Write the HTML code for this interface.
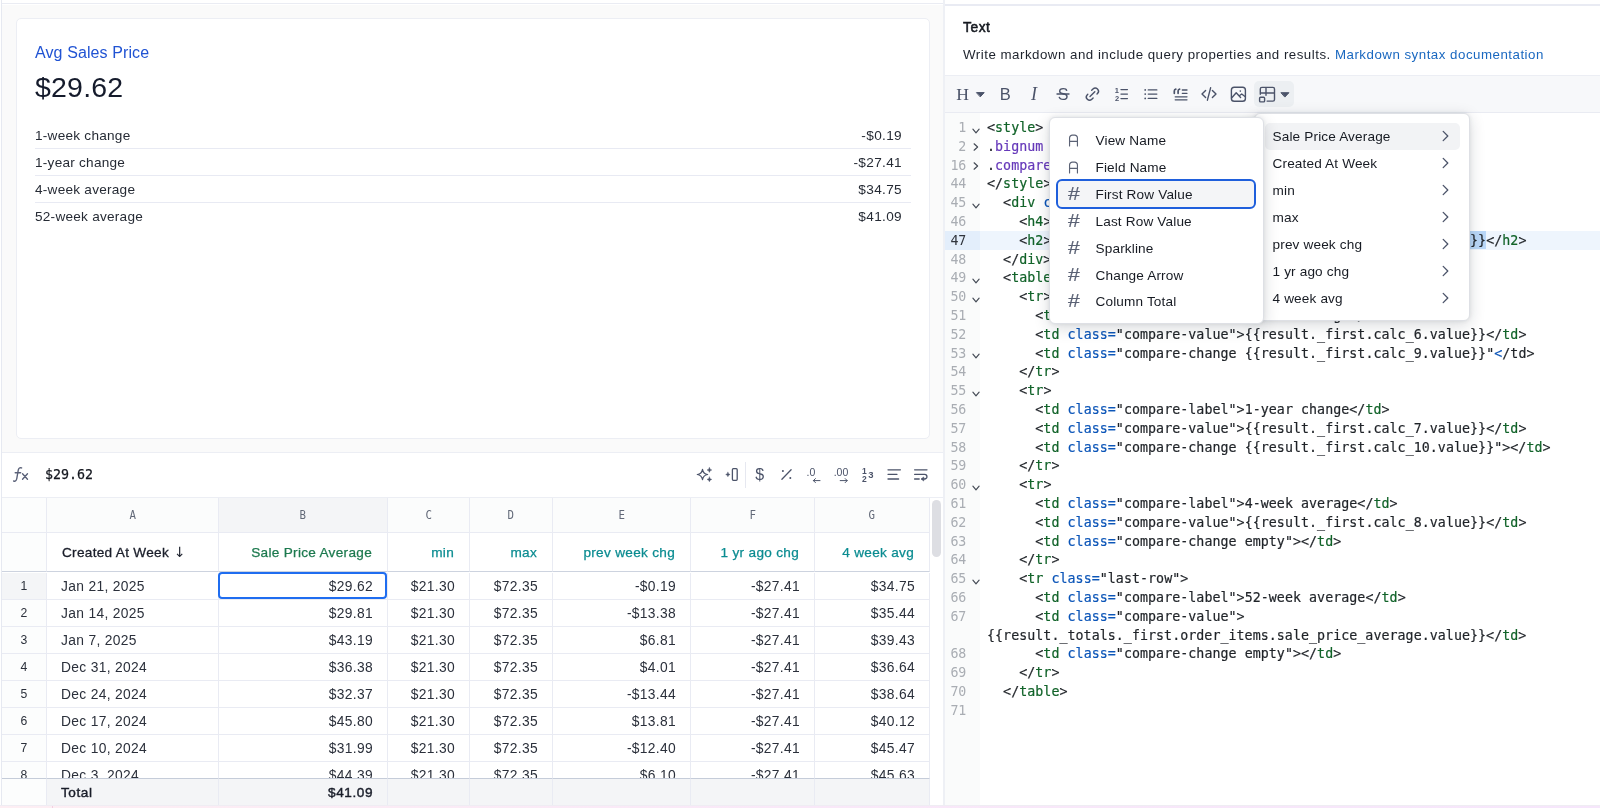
<!DOCTYPE html>
<html lang="en">
<head>
<meta charset="utf-8">
<title>Text tile editor</title>
<style>
*{box-sizing:border-box;margin:0;padding:0}
html,body{width:1600px;height:808px;overflow:hidden;background:#fff}
body{position:relative;transform:translateZ(0);will-change:transform;font-family:"Liberation Sans",Arial,sans-serif;color:#1f2430;-webkit-font-smoothing:antialiased}
.abs{position:absolute}
/* ---------- left pane ---------- */
#left{position:absolute;left:0;top:0;width:944px;height:808px;background:#fff}
#ledge{position:absolute;left:1px;top:0;width:1px;height:808px;background:#e6e9f1}
#topline{position:absolute;left:2px;top:3.200px;width:942px;height:1.300px;background:#eaecf3}
#prevbg{position:absolute;left:2px;top:5px;width:942px;height:447px;background:#fafafa}
#card{position:absolute;left:16px;top:18px;width:914px;height:421px;background:#fff;border:1px solid #eceef4;border-radius:5px}
#card h4{position:absolute;left:18px;top:24px;font-weight:400;font-size:16px;line-height:20px;color:#2053d3;letter-spacing:.1px;white-space:nowrap}
#card h2{position:absolute;left:18px;top:51px;font-weight:400;font-size:28.5px;line-height:34px;color:#151b2c;letter-spacing:.2px;white-space:nowrap}
.cmp{position:absolute;left:18px;width:876px;height:27px;border-bottom:1px solid #e8eaf3;font-size:13.6px;line-height:27px;color:#262b35;letter-spacing:.25px;white-space:nowrap}
.cmp.last{border-bottom:0}
.cmp b{font-weight:400;position:absolute;right:9px;top:0;letter-spacing:.35px}

/* ---------- formula bar ---------- */
#fbar{position:absolute;left:2px;top:452px;width:942px;height:46px;background:#fff;border-top:1px solid #eceef4;border-bottom:1px solid #eceef4}
#fx{position:absolute;left:8.600px;top:11.200px}
#fval{position:absolute;left:43px;top:12px;font-family:"DejaVu Sans Mono","Liberation Mono",monospace;font-size:13.3px;line-height:20px;color:#14171f;-webkit-text-stroke:.25px #14171f;white-space:nowrap}
.fi{position:absolute;top:11px;width:22px;height:22px}
#fdiv{position:absolute;left:743px;top:9px;width:1px;height:26px;background:#e6e8f0}
/* ---------- grid ---------- */
#grid{position:absolute;left:0;top:0;width:944px;height:808px;font-size:13.8px;letter-spacing:.33px}
.gr{position:absolute;left:0;width:930px}
.c{position:absolute;top:0;height:100%;border-right:1px solid #e9ebf3;border-bottom:1px solid #e9ebf3;white-space:nowrap;overflow:hidden;background:#fff}
.lr .c{background:#fbfcfc;line-height:33px;text-align:center;font-family:"DejaVu Sans Mono","Liberation Mono",monospace;font-size:12.5px;color:#626978;letter-spacing:0}
.lr .c.sel{background:#f4f5f7}
.lt span{display:inline-block;transform:scaleX(.86)}
.nr .c{line-height:39px;border-bottom-color:#cdd3df;font-size:13.6px;letter-spacing:.3px}
.c.rn{background:#fcfdfd;text-align:center;color:#737a8a;font-size:12.2px;letter-spacing:0}
.c.rn.selr{background:#f4f5f7}
.fn{text-align:right;padding-right:15px}
.fn.dim{text-align:left;padding-left:15px;padding-right:0;color:#1a1e2a;-webkit-text-stroke:.3px #1a1e2a}
.fn.dim i{font-style:normal;-webkit-text-stroke:0;font-size:14px;font-family:"DejaVu Sans",sans-serif;margin-left:1px;position:relative;top:-.5px}
.fn.meas{color:#1d7a4f;-webkit-text-stroke:.25px #1d7a4f}
.fn.calc{color:#0b8c91;-webkit-text-stroke:.25px #0b8c91}
.dr .c{line-height:27px;color:#2b303b}
.d.l{padding-left:14px}
.d.r{text-align:right;padding-right:14px}
#selcell{position:absolute;left:218px;top:572px;width:169px;height:27px;border:2px solid #1f6df0;border-radius:4px}
.tr .c{background:#f4f5f7;border-top:1px solid #c5ccd9;line-height:27.500px;font-weight:400;-webkit-text-stroke:.42px #1a1e2a;color:#1a1e2a;border-bottom:0;letter-spacing:.55px;font-size:13.6px}
.tr .c.rn{background:#fcfdfd}
.t.l{padding-left:14px}
.t.r{text-align:right;padding-right:14px}
#gscroll{position:absolute;left:932px;top:499.500px;width:9px;height:57px;border-radius:4.500px;background:#dddee3}
#pink{position:absolute;left:0;top:805px;width:1600px;height:3px;border-top:1px solid #efedf3;background:linear-gradient(90deg,#fdeef3 0%,#f9e8f8 50%,#f6e6fb 100%)}
#pinkv{position:absolute;left:52px;top:806px;width:1px;height:2px;background:#f3cfe0}

/* ---------- right pane ---------- */
#right{position:absolute;left:945px;top:5px;width:655px;height:801px;background:#fff}
#vsep{position:absolute;left:943.400px;top:0;width:1.300px;height:806px;background:#eef0f5}
#topr{position:absolute;left:945px;top:4px;width:655px;height:1.600px;background:#e9ebf3}
#rt{position:absolute;left:18px;top:13px;font-size:13.8px;line-height:20px;font-weight:400;-webkit-text-stroke:.5px #14181f;color:#14181f;letter-spacing:.55px}
#rd{position:absolute;left:18px;top:40px;font-size:13.3px;line-height:20px;color:#1d222c;letter-spacing:.5px;white-space:nowrap}
#rd a{color:#1a68c0;text-decoration:none}
#tb{position:absolute;left:0;top:70px;width:655px;height:38px;background:#f7f8fa;border-top:1px solid #eceef4;border-bottom:1px solid #e9ebf2}
.ti{position:absolute;top:0;height:36px;color:#4b5369;text-align:center;line-height:36px}
#tblbtn{position:absolute;left:309px;top:5px;width:40px;height:26px;border-radius:5px;background:#eceff2}
.ic{position:absolute}
/* editor */
#ed{position:absolute;left:0;top:108px;width:655px;height:693px;background:#fff;overflow:hidden}
#gut{position:absolute;left:0;top:0;width:35px;height:693px;background:#fafbfb}
#code{position:absolute;left:0;top:5px;width:655px;font-family:"DejaVu Sans Mono","Liberation Mono",monospace;font-size:13.3px;line-height:18.8px;color:#1f2328;letter-spacing:.045px}
.ln{position:relative;height:18.8px;white-space:pre}
.ln.act{background:#eef5fd}
.ln.act .no{background:#e3eefb;color:#30343c}
.no{position:absolute;left:0;top:0;width:35px;height:18.8px;padding-right:14px;padding-top:1px;text-align:right;color:#a9adb3;letter-spacing:-.2px}
.fd{position:absolute;left:26px}
.fdv{top:7.7px}
.fdr{top:5.2px;left:25.800px}
.cd{position:absolute;left:42px;top:1px;-webkit-text-stroke:.2px}
.tg{color:#116329}
.at{color:#0b55b8}
.sel{color:#6639ba}
.hs{background:#b9d7f8;padding:1.650px 0}

/* ---------- menus ---------- */
.menu{position:absolute;background:#fff;border:1px solid #dee0e5;border-radius:6px;box-shadow:0 4px 16px rgba(20,28,45,.16),0 0 4px rgba(20,28,45,.09);font-size:13.6px;color:#171b23;letter-spacing:.15px}
#m2{left:1254px;top:113px;width:215.600px;height:208px}
#m1{left:1048.500px;top:117px;width:215.500px;height:207px}
.mi{position:absolute;left:7px;height:27px;line-height:27px;white-space:nowrap;border-radius:5px}
#m1 .mi{width:198px;padding-left:39px}
#m2 .mi{left:9.5px;width:195px;padding-left:8px}
.mi.hov{background:#f2f3f5}
#foc{position:absolute;left:6px;top:60.500px;width:200px;height:30.500px;border:2px solid #1f5fdc;border-radius:6px;background:#f4f5f7}
.hash{position:absolute;left:10px;top:0;width:14px;text-align:center;font-size:18px;color:#5b6275;letter-spacing:0;-webkit-text-stroke:.2px #5b6275;transform:scaleX(1.18)}
.aic{position:absolute;left:11.800px;top:6.800px}
.chv{position:absolute;right:9.300px;top:7.200px}
</style>
</head>
<body>
<div id="left">
  <div id="ledge"></div>
  <div id="topline"></div>
  <div id="prevbg"></div>
  <div id="card">
    <h4>Avg Sales Price</h4>
    <h2>$29.62</h2>
    <div class="cmp" style="top:103px">1-week change<b>-$0.19</b></div>
    <div class="cmp" style="top:130px">1-year change<b>-$27.41</b></div>
    <div class="cmp" style="top:157px">4-week average<b>$34.75</b></div>
    <div class="cmp last" style="top:184px">52-week average<b>$41.09</b></div>
  </div>
  <div id="fbar">
    <svg id="fx" width="21" height="21" viewBox="0 0 20 20" fill="none" stroke="#5a6178" stroke-width="1.3" stroke-linecap="round"><path d="M2.5 16.2c1.6.6 2.6-.3 3-2.3l1.4-8c.4-2 1.500-2.800 3.200-2.100M4 8.300h5.200M11 9.300l4.700 5.200M15.700 9.300l-4.700 5.200"/></svg>
    <div id="fval">$29.62</div>
    <div id="fdiv"></div>
  </div>
<div id="grid">
  <div class="gr lr" style="top:498px;height:35px">
    <div class="c rn" style="left:2px;width:45px"></div>
    <div class="c lt" style="left:47px;width:172px"><span>A</span></div>
    <div class="c lt sel" style="left:219px;width:169px"><span>B</span></div>
    <div class="c lt" style="left:388px;width:82px"><span>C</span></div>
    <div class="c lt" style="left:470px;width:83px"><span>D</span></div>
    <div class="c lt" style="left:553px;width:138px"><span>E</span></div>
    <div class="c lt" style="left:691px;width:124px"><span>F</span></div>
    <div class="c lt" style="left:815px;width:115px"><span>G</span></div>
  </div>
  <div class="gr nr" style="top:533px;height:39px">
    <div class="c rn" style="left:2px;width:45px"></div>
    <div class="c fn dim" style="left:47px;width:172px">Created At Week <i>↓</i></div>
    <div class="c fn meas" style="left:219px;width:169px">Sale Price Average</div>
    <div class="c fn calc" style="left:388px;width:82px">min</div>
    <div class="c fn calc" style="left:470px;width:83px">max</div>
    <div class="c fn calc" style="left:553px;width:138px">prev week chg</div>
    <div class="c fn calc" style="left:691px;width:124px">1 yr ago chg</div>
    <div class="c fn calc" style="left:815px;width:115px">4 week avg</div>
  </div>
  <div class="gr dr" style="top:573px;height:27px">
    <div class="c rn selr" style="left:2px;width:45px">1</div>
    <div class="c d l" style="left:47px;width:172px">Jan 21, 2025</div>
    <div class="c d r" style="left:219px;width:169px">$29.62</div>
    <div class="c d r" style="left:388px;width:82px">$21.30</div>
    <div class="c d r" style="left:470px;width:83px">$72.35</div>
    <div class="c d r" style="left:553px;width:138px">-$0.19</div>
    <div class="c d r" style="left:691px;width:124px">-$27.41</div>
    <div class="c d r" style="left:815px;width:115px">$34.75</div>
  </div>
  <div class="gr dr" style="top:600px;height:27px">
    <div class="c rn" style="left:2px;width:45px">2</div>
    <div class="c d l" style="left:47px;width:172px">Jan 14, 2025</div>
    <div class="c d r" style="left:219px;width:169px">$29.81</div>
    <div class="c d r" style="left:388px;width:82px">$21.30</div>
    <div class="c d r" style="left:470px;width:83px">$72.35</div>
    <div class="c d r" style="left:553px;width:138px">-$13.38</div>
    <div class="c d r" style="left:691px;width:124px">-$27.41</div>
    <div class="c d r" style="left:815px;width:115px">$35.44</div>
  </div>
  <div class="gr dr" style="top:627px;height:27px">
    <div class="c rn" style="left:2px;width:45px">3</div>
    <div class="c d l" style="left:47px;width:172px">Jan 7, 2025</div>
    <div class="c d r" style="left:219px;width:169px">$43.19</div>
    <div class="c d r" style="left:388px;width:82px">$21.30</div>
    <div class="c d r" style="left:470px;width:83px">$72.35</div>
    <div class="c d r" style="left:553px;width:138px">$6.81</div>
    <div class="c d r" style="left:691px;width:124px">-$27.41</div>
    <div class="c d r" style="left:815px;width:115px">$39.43</div>
  </div>
  <div class="gr dr" style="top:654px;height:27px">
    <div class="c rn" style="left:2px;width:45px">4</div>
    <div class="c d l" style="left:47px;width:172px">Dec 31, 2024</div>
    <div class="c d r" style="left:219px;width:169px">$36.38</div>
    <div class="c d r" style="left:388px;width:82px">$21.30</div>
    <div class="c d r" style="left:470px;width:83px">$72.35</div>
    <div class="c d r" style="left:553px;width:138px">$4.01</div>
    <div class="c d r" style="left:691px;width:124px">-$27.41</div>
    <div class="c d r" style="left:815px;width:115px">$36.64</div>
  </div>
  <div class="gr dr" style="top:681px;height:27px">
    <div class="c rn" style="left:2px;width:45px">5</div>
    <div class="c d l" style="left:47px;width:172px">Dec 24, 2024</div>
    <div class="c d r" style="left:219px;width:169px">$32.37</div>
    <div class="c d r" style="left:388px;width:82px">$21.30</div>
    <div class="c d r" style="left:470px;width:83px">$72.35</div>
    <div class="c d r" style="left:553px;width:138px">-$13.44</div>
    <div class="c d r" style="left:691px;width:124px">-$27.41</div>
    <div class="c d r" style="left:815px;width:115px">$38.64</div>
  </div>
  <div class="gr dr" style="top:708px;height:27px">
    <div class="c rn" style="left:2px;width:45px">6</div>
    <div class="c d l" style="left:47px;width:172px">Dec 17, 2024</div>
    <div class="c d r" style="left:219px;width:169px">$45.80</div>
    <div class="c d r" style="left:388px;width:82px">$21.30</div>
    <div class="c d r" style="left:470px;width:83px">$72.35</div>
    <div class="c d r" style="left:553px;width:138px">$13.81</div>
    <div class="c d r" style="left:691px;width:124px">-$27.41</div>
    <div class="c d r" style="left:815px;width:115px">$40.12</div>
  </div>
  <div class="gr dr" style="top:735px;height:27px">
    <div class="c rn" style="left:2px;width:45px">7</div>
    <div class="c d l" style="left:47px;width:172px">Dec 10, 2024</div>
    <div class="c d r" style="left:219px;width:169px">$31.99</div>
    <div class="c d r" style="left:388px;width:82px">$21.30</div>
    <div class="c d r" style="left:470px;width:83px">$72.35</div>
    <div class="c d r" style="left:553px;width:138px">-$12.40</div>
    <div class="c d r" style="left:691px;width:124px">-$27.41</div>
    <div class="c d r" style="left:815px;width:115px">$45.47</div>
  </div>
  <div class="gr dr" style="top:762px;height:27px">
    <div class="c rn" style="left:2px;width:45px">8</div>
    <div class="c d l" style="left:47px;width:172px">Dec 3, 2024</div>
    <div class="c d r" style="left:219px;width:169px">$44.39</div>
    <div class="c d r" style="left:388px;width:82px">$21.30</div>
    <div class="c d r" style="left:470px;width:83px">$72.35</div>
    <div class="c d r" style="left:553px;width:138px">$6.10</div>
    <div class="c d r" style="left:691px;width:124px">-$27.41</div>
    <div class="c d r" style="left:815px;width:115px">$45.63</div>
  </div>
  <div id="selcell"></div>
  <div class="gr tr" style="top:778px;height:28px">
    <div class="c rn" style="left:2px;width:45px"></div>
    <div class="c t l" style="left:47px;width:172px">Total</div>
    <div class="c t r" style="left:219px;width:169px">$41.09</div>
    <div class="c t r" style="left:388px;width:82px"></div>
    <div class="c t r" style="left:470px;width:83px"></div>
    <div class="c t r" style="left:553px;width:138px"></div>
    <div class="c t r" style="left:691px;width:124px"></div>
    <div class="c t r" style="left:815px;width:115px"></div>
  </div>
</div>
<svg class="ic" style="left:690px;top:455px" width="250" height="40" viewBox="690 455 250 40" fill="none" stroke="#4b5369" stroke-width="1.300" stroke-linecap="round" stroke-linejoin="round">
    <path d="M702.500 469.300q.7 4.500 5.200 5.200q-4.500 .7-5.200 5.200q-.7-4.500-5.200-5.200q4.500-.7 5.200-5.200z" stroke-width="1.200"/>
    <path d="M709.400 467.600q.3 2.100 2.400 2.400q-2.100 .3-2.400 2.400q-.3-2.100-2.400-2.400q2.100-.3 2.400-2.400zM709.400 477q.3 2.100 2.400 2.400q-2.100 .3-2.400 2.400q-.3-2.100-2.400-2.400q2.100-.3 2.400-2.400z" fill="#4b5369" stroke-width=".4"/>
    <path d="M727.900 472.300q.3 1.900 2.200 2.200q-1.900 .3-2.200 2.200q-.3-1.900-2.200-2.200q1.900-.3 2.200-2.200z" fill="#4b5369" stroke-width=".4"/>
    <rect x="732.400" y="468.700" width="4.800" height="11.600" rx="1"/>
    <text x="759.700" y="480" font-family="Liberation Sans,sans-serif" font-size="16" text-anchor="middle" fill="#4b5369" stroke="none">$</text>
    <path d="M781.900 479.200l9.200-9.400"/>
    <path d="M782.900 471h.01M790.300 478.100h.01" stroke-width="2"/>
    <text x="811" y="476.300" font-family="Liberation Sans,sans-serif" font-size="10.500" text-anchor="middle" fill="#4b5369" stroke="none">.0</text>
    <path d="M820 480.600h-6.600M815.400 478.600l-2 2 2 2" stroke-width="1"/>
    <text x="841" y="476.300" font-family="Liberation Sans,sans-serif" font-size="10.500" text-anchor="middle" fill="#4b5369" stroke="none">.00</text>
    <path d="M840.200 480.600h6.900M845.200 478.600l2 2-2 2" stroke-width="1"/>
    <text x="864.300" y="473.700" font-family="Liberation Sans,sans-serif" font-weight="700" font-size="8.500" text-anchor="middle" fill="#4b5369" stroke="none">1</text>
    <text x="864.300" y="481.800" font-family="Liberation Sans,sans-serif" font-weight="700" font-size="8.500" text-anchor="middle" fill="#4b5369" stroke="none">2</text>
    <text x="871" y="478.300" font-family="Liberation Sans,sans-serif" font-weight="700" font-size="9.500" text-anchor="middle" fill="#4b5369" stroke="none">3</text>
    <path d="M888 469.800h12.400M888 474.300h9M888 479h10.600"/>
    <path d="M914.600 469.800h12.400M914.600 474.300h10a2.350 2.350 0 0 1 0 4.700h-2.800M914.600 479h4.600"/>
    <path d="M923.400 477.300l-2 1.700 2 1.700z" fill="#4b5369" stroke-width=".8"/>
  </svg>
  <div id="gscroll"></div>
</div>
<div id="right">
  <div id="rt">Text</div>
  <div id="rd">Write markdown and include query properties and results. <a>Markdown syntax documentation</a></div>
  <div id="tb">
    <div id="tblbtn"></div>
    <svg class="ic" style="left:0;top:0" width="360" height="36" viewBox="945 76 360 36" fill="none" stroke="#4b5369" stroke-width="1.400" stroke-linecap="round" stroke-linejoin="round">
      <text x="962.500" y="100.100" font-family="Liberation Serif,serif" font-size="17.600" text-anchor="middle" fill="#4b5369" stroke="none">H</text>
      <path d="M976.800 92.600h7.400l-3.700 4z" fill="#4b5369" stroke-width="1"/>
      <text x="1005.300" y="100" font-family="Liberation Sans,sans-serif" font-size="16.500" text-anchor="middle" fill="#4b5369" stroke="none">B</text>
      <text x="1034" y="100" font-family="Liberation Serif,serif" font-style="italic" font-size="18" text-anchor="middle" fill="#4b5369" stroke="none">I</text>
      <text x="1063" y="100" font-family="Liberation Sans,sans-serif" font-size="16" text-anchor="middle" fill="#4b5369" stroke="none">S</text>
      <path d="M1057 94h12"/>
      <g transform="translate(1092.400 94.100) rotate(-45)"><path d="M2.200 -3.200H4A3.200 3.200 0 0 1 4 3.200H3.300M-2.200 3.200H-4A3.200 3.200 0 0 1 -4 -3.200H-3.300M-3.400 0H3.400"/></g>
      <text x="1116.800" y="93" font-family="Liberation Sans,sans-serif" font-weight="700" font-size="7.500" text-anchor="middle" fill="#4b5369" stroke="none">1</text>
      <text x="1117" y="100.800" font-family="Liberation Sans,sans-serif" font-weight="700" font-size="7.500" text-anchor="middle" fill="#4b5369" stroke="none">2</text>
      <path d="M1121 89.600h6.400M1121 94.100h6.400M1121 98.600h6.400"/>
      <path d="M1148.300 89.900h8.500M1148.300 94.100h8.500M1148.300 98.400h8.500"/>
      <path d="M1145.200 89.900h.01M1145.200 94.100h.01M1145.200 98.400h.01" stroke-width="1.800"/>
      <path d="M1174.300 93.300v-2.200q0-1.600 1.500-1.900M1178.100 93.300v-2.200q0-1.600 1.500-1.900" stroke-width="1.700"/>
      <path d="M1182.300 90h4.700M1182.300 93.300h4.700M1175.200 96.800h11.800M1175.200 99.800h11.800" stroke-width="1.300"/>
      <path d="M1205.600 90.400l-3.600 3.600 3.600 3.600M1212.400 90.400l3.600 3.600-3.600 3.600M1210.600 87.800l-3.200 12.400"/>
      <rect x="1231.400" y="87.200" width="14" height="14" rx="2.800"/>
      <path d="M1231.600 98l4.600-5.200 4.400 4.700M1239.300 95.700l2.400-1.700 3.600 2.800"/>
      <path d="M1240.300 91.100h.01" stroke-width="1.600"/>
      <path d="M1260.300 94.200v-5.200a1.600 1.600 0 0 1 1.600-1.600h11a1.600 1.600 0 0 1 1.600 1.600v10.500a1.600 1.600 0 0 1-1.600 1.600h-5.800M1260.300 93h14.200M1266 87.400v7.800"/>
      <rect x="1259.600" y="97.300" width="5" height="4.600" rx="1"/>
      <path d="M1281.300 92.700h7.600l-3.800 4.100z" fill="#4b5369" stroke-width="1"/>
    </svg>

  </div>
  <div id="ed">
    <div id="gut"></div>
<div id="code">
<div class="ln"><span class="no">1</span><svg class="fd fdv" width="10" height="10" viewBox="0 0 10 10"><path d="M1.900 3.200l3.100 3.600l3.100-3.600" fill="none" stroke="#444a55" stroke-width="1.200" stroke-linecap="round" stroke-linejoin="round"/></svg><span class="cd">&lt;<span class="tg">style</span>&gt;</span></div>
<div class="ln"><span class="no">2</span><svg class="fd fdr" width="10" height="10" viewBox="0 0 10 10"><path d="M3.100 1.800l3.500 3.200l-3.500 3.200" fill="none" stroke="#444a55" stroke-width="1.200" stroke-linecap="round" stroke-linejoin="round"/></svg><span class="cd">.<span class="sel">bignum</span> {…}</span></div>
<div class="ln"><span class="no">16</span><svg class="fd fdr" width="10" height="10" viewBox="0 0 10 10"><path d="M3.100 1.800l3.500 3.200l-3.500 3.200" fill="none" stroke="#444a55" stroke-width="1.200" stroke-linecap="round" stroke-linejoin="round"/></svg><span class="cd">.<span class="sel">compare</span> {…}</span></div>
<div class="ln"><span class="no">44</span><span class="cd">&lt;/<span class="tg">style</span>&gt;</span></div>
<div class="ln"><span class="no">45</span><svg class="fd fdv" width="10" height="10" viewBox="0 0 10 10"><path d="M1.900 3.200l3.100 3.600l3.100-3.600" fill="none" stroke="#444a55" stroke-width="1.200" stroke-linecap="round" stroke-linejoin="round"/></svg><span class="cd">  &lt;<span class="tg">div</span> <span class="at">class=</span>&quot;bignum&quot;&gt;</span></div>
<div class="ln"><span class="no">46</span><span class="cd">    &lt;<span class="tg">h4</span>&gt;Avg Sales Price&lt;/<span class="tg">h4</span>&gt;</span></div>
<div class="ln act"><span class="no">47</span><span class="cd">    &lt;<span class="tg">h2</span>&gt;<span class="hs">{{result._first.order_items.sale_price_average.value}}</span>&lt;/<span class="tg">h2</span>&gt;</span></div>
<div class="ln"><span class="no">48</span><span class="cd">  &lt;/<span class="tg">div</span>&gt;</span></div>
<div class="ln"><span class="no">49</span><svg class="fd fdv" width="10" height="10" viewBox="0 0 10 10"><path d="M1.900 3.200l3.100 3.600l3.100-3.600" fill="none" stroke="#444a55" stroke-width="1.200" stroke-linecap="round" stroke-linejoin="round"/></svg><span class="cd">  &lt;<span class="tg">table</span> <span class="at">class=</span>&quot;compare&quot;&gt;</span></div>
<div class="ln"><span class="no">50</span><svg class="fd fdv" width="10" height="10" viewBox="0 0 10 10"><path d="M1.900 3.200l3.100 3.600l3.100-3.600" fill="none" stroke="#444a55" stroke-width="1.200" stroke-linecap="round" stroke-linejoin="round"/></svg><span class="cd">    &lt;<span class="tg">tr</span>&gt;</span></div>
<div class="ln"><span class="no">51</span><span class="cd">      &lt;<span class="tg">td</span> <span class="at">class=</span>&quot;compare-label&quot;&gt;1-week change&lt;/<span class="tg">td</span>&gt;</span></div>
<div class="ln"><span class="no">52</span><span class="cd">      &lt;<span class="tg">td</span> <span class="at">class=</span>&quot;compare-value&quot;&gt;{{result._first.calc_6.value}}&lt;/<span class="tg">td</span>&gt;</span></div>
<div class="ln"><span class="no">53</span><svg class="fd fdv" width="10" height="10" viewBox="0 0 10 10"><path d="M1.900 3.200l3.100 3.600l3.100-3.600" fill="none" stroke="#444a55" stroke-width="1.200" stroke-linecap="round" stroke-linejoin="round"/></svg><span class="cd">      &lt;<span class="tg">td</span> <span class="at">class=</span>&quot;compare-change {{result._first.calc_9.value}}&quot;<span class="at">&lt;</span>/td&gt;</span></div>
<div class="ln"><span class="no">54</span><span class="cd">    &lt;/<span class="tg">tr</span>&gt;</span></div>
<div class="ln"><span class="no">55</span><svg class="fd fdv" width="10" height="10" viewBox="0 0 10 10"><path d="M1.900 3.200l3.100 3.600l3.100-3.600" fill="none" stroke="#444a55" stroke-width="1.200" stroke-linecap="round" stroke-linejoin="round"/></svg><span class="cd">    &lt;<span class="tg">tr</span>&gt;</span></div>
<div class="ln"><span class="no">56</span><span class="cd">      &lt;<span class="tg">td</span> <span class="at">class=</span>&quot;compare-label&quot;&gt;1-year change&lt;/<span class="tg">td</span>&gt;</span></div>
<div class="ln"><span class="no">57</span><span class="cd">      &lt;<span class="tg">td</span> <span class="at">class=</span>&quot;compare-value&quot;&gt;{{result._first.calc_7.value}}&lt;/<span class="tg">td</span>&gt;</span></div>
<div class="ln"><span class="no">58</span><span class="cd">      &lt;<span class="tg">td</span> <span class="at">class=</span>&quot;compare-change {{result._first.calc_10.value}}&quot;&gt;&lt;/<span class="tg">td</span>&gt;</span></div>
<div class="ln"><span class="no">59</span><span class="cd">    &lt;/<span class="tg">tr</span>&gt;</span></div>
<div class="ln"><span class="no">60</span><svg class="fd fdv" width="10" height="10" viewBox="0 0 10 10"><path d="M1.900 3.200l3.100 3.600l3.100-3.600" fill="none" stroke="#444a55" stroke-width="1.200" stroke-linecap="round" stroke-linejoin="round"/></svg><span class="cd">    &lt;<span class="tg">tr</span>&gt;</span></div>
<div class="ln"><span class="no">61</span><span class="cd">      &lt;<span class="tg">td</span> <span class="at">class=</span>&quot;compare-label&quot;&gt;4-week average&lt;/<span class="tg">td</span>&gt;</span></div>
<div class="ln"><span class="no">62</span><span class="cd">      &lt;<span class="tg">td</span> <span class="at">class=</span>&quot;compare-value&quot;&gt;{{result._first.calc_8.value}}&lt;/<span class="tg">td</span>&gt;</span></div>
<div class="ln"><span class="no">63</span><span class="cd">      &lt;<span class="tg">td</span> <span class="at">class=</span>&quot;compare-change empty&quot;&gt;&lt;/<span class="tg">td</span>&gt;</span></div>
<div class="ln"><span class="no">64</span><span class="cd">    &lt;/<span class="tg">tr</span>&gt;</span></div>
<div class="ln"><span class="no">65</span><svg class="fd fdv" width="10" height="10" viewBox="0 0 10 10"><path d="M1.900 3.200l3.100 3.600l3.100-3.600" fill="none" stroke="#444a55" stroke-width="1.200" stroke-linecap="round" stroke-linejoin="round"/></svg><span class="cd">    &lt;<span class="tg">tr</span> <span class="at">class=</span>&quot;last-row&quot;&gt;</span></div>
<div class="ln"><span class="no">66</span><span class="cd">      &lt;<span class="tg">td</span> <span class="at">class=</span>&quot;compare-label&quot;&gt;52-week average&lt;/<span class="tg">td</span>&gt;</span></div>
<div class="ln"><span class="no">67</span><span class="cd">      &lt;<span class="tg">td</span> <span class="at">class=</span>&quot;compare-value&quot;&gt;</span></div>
<div class="ln"><span class="no"></span><span class="cd">{{result._totals._first.order_items.sale_price_average.value}}&lt;/<span class="tg">td</span>&gt;</span></div>
<div class="ln"><span class="no">68</span><span class="cd">      &lt;<span class="tg">td</span> <span class="at">class=</span>&quot;compare-change empty&quot;&gt;&lt;/<span class="tg">td</span>&gt;</span></div>
<div class="ln"><span class="no">69</span><span class="cd">    &lt;/<span class="tg">tr</span>&gt;</span></div>
<div class="ln"><span class="no">70</span><span class="cd">  &lt;/<span class="tg">table</span>&gt;</span></div>
<div class="ln"><span class="no">71</span><span class="cd"></span></div>
</div>
  </div>
</div>
<div id="vsep"></div><div id="topr"></div>
<div class="menu" id="m2">
  <div class="mi hov" style="top:9.30px">Sale Price Average<svg class="chv" width="8" height="12" viewBox="0 0 8 12" fill="none" stroke="#4b5369" stroke-width="1.300" stroke-linecap="round" stroke-linejoin="round"><path d="M1.200 1.400l4.600 4.600-4.600 4.600"/></svg></div>
  <div class="mi" style="top:36.30px">Created At Week<svg class="chv" width="8" height="12" viewBox="0 0 8 12" fill="none" stroke="#4b5369" stroke-width="1.300" stroke-linecap="round" stroke-linejoin="round"><path d="M1.200 1.400l4.600 4.600-4.600 4.600"/></svg></div>
  <div class="mi" style="top:63.30px">min<svg class="chv" width="8" height="12" viewBox="0 0 8 12" fill="none" stroke="#4b5369" stroke-width="1.300" stroke-linecap="round" stroke-linejoin="round"><path d="M1.200 1.400l4.600 4.600-4.600 4.600"/></svg></div>
  <div class="mi" style="top:90.30px">max<svg class="chv" width="8" height="12" viewBox="0 0 8 12" fill="none" stroke="#4b5369" stroke-width="1.300" stroke-linecap="round" stroke-linejoin="round"><path d="M1.200 1.400l4.600 4.600-4.600 4.600"/></svg></div>
  <div class="mi" style="top:117.30px">prev week chg<svg class="chv" width="8" height="12" viewBox="0 0 8 12" fill="none" stroke="#4b5369" stroke-width="1.300" stroke-linecap="round" stroke-linejoin="round"><path d="M1.200 1.400l4.600 4.600-4.600 4.600"/></svg></div>
  <div class="mi" style="top:144.30px">1 yr ago chg<svg class="chv" width="8" height="12" viewBox="0 0 8 12" fill="none" stroke="#4b5369" stroke-width="1.300" stroke-linecap="round" stroke-linejoin="round"><path d="M1.200 1.400l4.600 4.600-4.600 4.600"/></svg></div>
  <div class="mi" style="top:171.30px">4 week avg<svg class="chv" width="8" height="12" viewBox="0 0 8 12" fill="none" stroke="#4b5369" stroke-width="1.300" stroke-linecap="round" stroke-linejoin="round"><path d="M1.200 1.400l4.600 4.600-4.600 4.600"/></svg></div>
</div>
<div class="menu" id="m1">
  <div id="foc"></div>
  <div class="mi" style="top:9.20px"><svg class="aic" width="11" height="13" viewBox="0 0 12 14" fill="none" stroke="#5b6275" stroke-width="1.250" stroke-linecap="round"><path d="M1.700 13v-8.800a3 3 0 0 1 3-3h2.600a3 3 0 0 1 3 3v8.800M1.700 8h8.600"/></svg>View Name</div>
  <div class="mi" style="top:36.08px"><svg class="aic" width="11" height="13" viewBox="0 0 12 14" fill="none" stroke="#5b6275" stroke-width="1.250" stroke-linecap="round"><path d="M1.700 13v-8.800a3 3 0 0 1 3-3h2.600a3 3 0 0 1 3 3v8.800M1.700 8h8.600"/></svg>Field Name</div>
  <div class="mi" style="top:62.96px"><span class="hash">#</span>First Row Value</div>
  <div class="mi" style="top:89.84px"><span class="hash">#</span>Last Row Value</div>
  <div class="mi" style="top:116.72px"><span class="hash">#</span>Sparkline</div>
  <div class="mi" style="top:143.60px"><span class="hash">#</span>Change Arrow</div>
  <div class="mi" style="top:170.48px"><span class="hash">#</span>Column Total</div>
</div>
<div id="pink"></div><div id="pinkv"></div>
</body>
</html>
